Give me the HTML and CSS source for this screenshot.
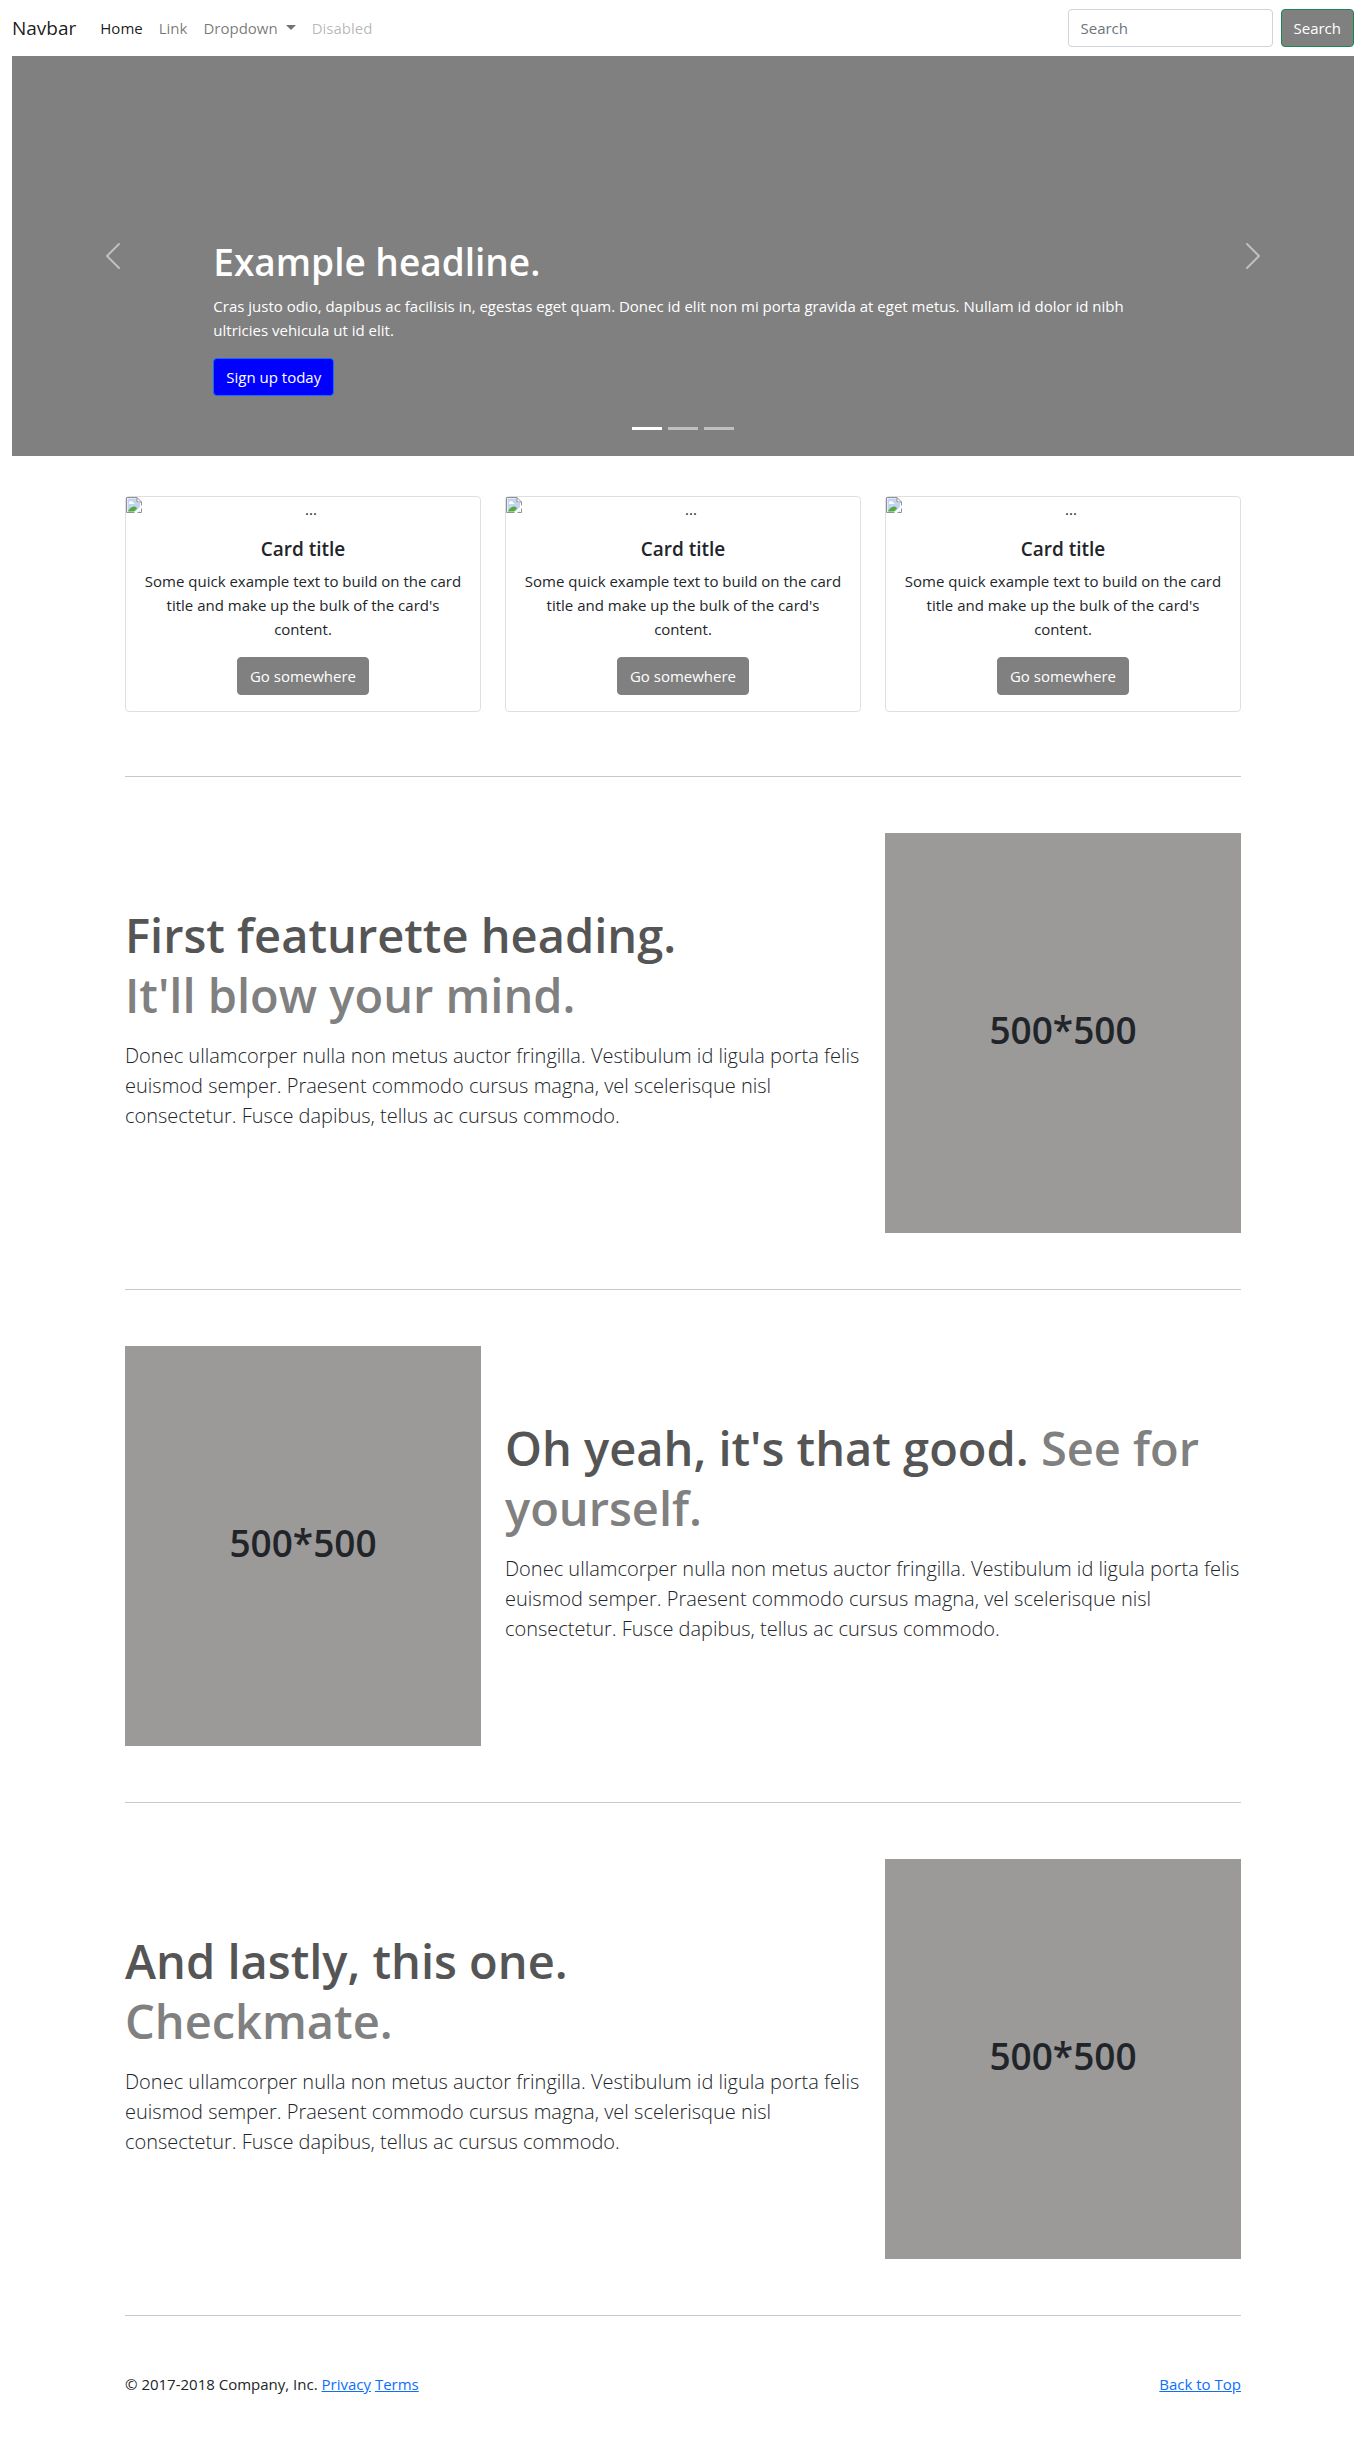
FILE: index.html
```html
<!DOCTYPE html>
<html lang="en">
<head>
<meta charset="utf-8">
<meta name="viewport" content="width=device-width, initial-scale=1">
<title>Carousel page</title>
<link rel="stylesheet" href="styles.css">
</head>
<body>
<svg class="sprite" aria-hidden="true">
  <symbol id="broken-image" viewBox="0 0 16 16">
    <path d="M.5 .5H11L15.500 5V15.500H.5z" fill="#fff"/>
    <path d="M1.500 1.500H11V6H14V14.500H1.500z" fill="#c3d4f4"/>
    <path d="M3 6.500a2 2 0 0 1 4-1a1.500 1.500 0 0 1 1.500 1.500H3z" fill="#fff"/>
    <path d="M2 14.500C3 11.500 6 9.500 8 9.500S10.500 10.500 11 11.500L8 14.500z" fill="#54ab35"/>
    <path d="M.5 15.500V.5H11L15.500 5V15.500H.5M11 .5V5H15.500" fill="none" stroke="#919191"/>
    <path d="M8 16L16 8V11L11 16z" fill="#fff"/>
  </symbol>
</svg>
<nav class="navbar">
  <a class="brand" href="#">Navbar</a>
  <ul class="nav-list">
    <li><a class="nav-link active" href="#">Home</a></li>
    <li><a class="nav-link" href="#">Link</a></li>
    <li><a class="nav-link dropdown" href="#">Dropdown</a></li>
    <li><a class="nav-link disabled" href="#" aria-disabled="true">Disabled</a></li>
  </ul>
  <form class="search">
    <input class="search-input" type="search" placeholder="Search" aria-label="Search">
    <button class="btn btn-search" type="submit">Search</button>
  </form>
</nav>

<header class="carousel">
  <button class="control" type="button" aria-label="Previous">
    <svg viewBox="0 0 16 16" fill="#fff"><path d="M11.354 1.646a.5.5 0 0 1 0 .708L5.707 8l5.647 5.646a.5.5 0 0 1-.708.708l-6-6a.5.5 0 0 1 0-.708l6-6a.5.5 0 0 1 .708 0z"/></svg>
  </button>
  <div class="slide">
    <h1>Example headline.</h1>
    <p>Cras justo odio, dapibus ac facilisis in, egestas eget quam. Donec id elit non mi porta gravida at eget metus. Nullam id dolor id nibh ultricies vehicula ut id elit.</p>
    <a class="btn btn-primary" href="#">Sign up today</a>
  </div>
  <button class="control" type="button" aria-label="Next">
    <svg viewBox="0 0 16 16" fill="#fff"><path d="M4.646 1.646a.5.5 0 0 1 .708 0l6 6a.5.5 0 0 1 0 .708l-6 6a.5.5 0 0 1-.708-.708L10.293 8 4.646 2.354a.5.5 0 0 1 0-.708z"/></svg>
  </button>
  <div class="indicators">
    <button class="current" type="button" aria-label="Slide 1"></button>
    <button type="button" aria-label="Slide 2"></button>
    <button type="button" aria-label="Slide 3"></button>
  </div>
</header>

<main class="container">
  <section class="cards">
    <article class="card">
      <div class="card-image"><svg><use href="#broken-image"/></svg><span>...</span></div>
      <div class="card-body">
        <h2>Card title</h2>
        <p>Some quick example text to build on the card title and make up the bulk of the card's content.</p>
        <a class="btn btn-gray" href="#">Go somewhere</a>
      </div>
    </article>
    <article class="card">
      <div class="card-image"><svg><use href="#broken-image"/></svg><span>...</span></div>
      <div class="card-body">
        <h2>Card title</h2>
        <p>Some quick example text to build on the card title and make up the bulk of the card's content.</p>
        <a class="btn btn-gray" href="#">Go somewhere</a>
      </div>
    </article>
    <article class="card">
      <div class="card-image"><svg><use href="#broken-image"/></svg><span>...</span></div>
      <div class="card-body">
        <h2>Card title</h2>
        <p>Some quick example text to build on the card title and make up the bulk of the card's content.</p>
        <a class="btn btn-gray" href="#">Go somewhere</a>
      </div>
    </article>
  </section>

  <hr>
  <section class="featurette">
    <div class="feature-text">
      <h2>First featurette heading. <span class="new-line">It'll blow your mind.</span></h2>
      <p>Donec ullamcorper nulla non metus auctor fringilla. Vestibulum id ligula porta felis euismod semper. Praesent commodo cursus magna, vel scelerisque nisl consectetur. Fusce dapibus, tellus ac cursus commodo.</p>
    </div>
    <div class="placeholder">500*500</div>
  </section>

  <hr>
  <section class="featurette">
    <div class="placeholder">500*500</div>
    <div class="feature-text">
      <h2>Oh yeah, it's that good. <span>See for yourself.</span></h2>
      <p>Donec ullamcorper nulla non metus auctor fringilla. Vestibulum id ligula porta felis euismod semper. Praesent commodo cursus magna, vel scelerisque nisl consectetur. Fusce dapibus, tellus ac cursus commodo.</p>
    </div>
  </section>

  <hr>
  <section class="featurette">
    <div class="feature-text">
      <h2>And lastly, this one. <span class="new-line">Checkmate.</span></h2>
      <p>Donec ullamcorper nulla non metus auctor fringilla. Vestibulum id ligula porta felis euismod semper. Praesent commodo cursus magna, vel scelerisque nisl consectetur. Fusce dapibus, tellus ac cursus commodo.</p>
    </div>
    <div class="placeholder">500*500</div>
  </section>

  <hr>
  <footer class="footer">
    <p>© 2017-2018 Company, Inc. <a href="#">Privacy</a> <a href="#">Terms</a></p>
    <a href="#">Back to Top</a>
  </footer>
</main>
</body>
</html>
```
FILE: styles.css
```css
* { box-sizing: border-box; }

body {
  margin: 0;
  padding: 0 12px;
  font-family: "Segoe UI", "Open Sans", sans-serif;
  font-size: 15px;
  line-height: 24px;
  color: #212529;
  background: #fff;
}

h1, h2, p, ul { margin: 0; padding: 0; }
h1, h2 { font-weight: 600; }
a { color: #0d6efd; }
.sprite { display: none; }

.btn {
  display: inline-block;
  padding: 6px 12px;
  border: 1px solid gray;
  border-radius: 4px;
  background: gray;
  color: #fff;
  font: inherit;
  text-align: center;
  text-decoration: none;
  cursor: pointer;
}
.btn-primary { background: blue; border-color: #0d6efd; }
.btn-search { border-color: #198754; }

.navbar { display: flex; align-items: center; height: 56px; }
.brand {
  margin-right: 16px;
  color: rgba(0, 0, 0, .9);
  font-size: 19px;
  line-height: 30px;
  text-decoration: none;
}
.nav-list { display: flex; list-style: none; }
.nav-link {
  display: block;
  padding: 8px;
  color: rgba(0, 0, 0, .55);
  text-decoration: none;
}
.nav-link.active { color: rgba(0, 0, 0, .9); }
.nav-link.disabled { color: rgba(0, 0, 0, .3); }
.dropdown::after {
  content: "";
  display: inline-block;
  margin-left: 8px;
  vertical-align: 4px;
  border: 5px solid transparent;
  border-top-color: currentColor;
  border-bottom: 0;
}
.search { display: flex; gap: 8px; margin-left: auto; }
.search-input {
  width: 205px;
  height: 38px;
  padding: 6px 12px;
  border: 1px solid #ced4da;
  border-radius: 4px;
  background: #fff;
  color: #212529;
  font: inherit;
}
.search-input::placeholder { color: #6c757d; opacity: 1; }

.carousel {
  position: relative;
  display: grid;
  grid-template-columns: 15% 1fr 15%;
  min-height: 400px;
  background: gray;
  color: #fff;
}
.slide { align-self: end; padding: 60px 0; }
.slide h1 { margin-bottom: 8px; font-size: 37px; line-height: 48px; }
.slide p { margin-bottom: 16px; }
.slide .btn { display: table; }
.control {
  display: flex;
  align-items: center;
  justify-content: center;
  padding: 0;
  border: 0;
  background: none;
  opacity: .5;
}
.control svg { width: 32px; height: 32px; }
.indicators {
  position: absolute;
  right: 0;
  bottom: 26px;
  left: 0;
  display: flex;
  justify-content: center;
  gap: 6px;
}
.indicators button {
  width: 30px;
  height: 3px;
  padding: 0;
  border: 0;
  background: #fff;
  opacity: .5;
}
.indicators .current { opacity: 1; }

.container { max-width: 1116px; margin: 0 auto; padding-top: 40px; }
.cards {
  display: grid;
  grid-template-columns: repeat(3, 1fr);
  gap: 24px;
  margin-bottom: 64px;
}
.card {
  border: 1px solid rgba(0, 0, 0, .125);
  border-radius: 4px;
  text-align: center;
}
.card-image { display: flex; }
.card-image svg { width: 16px; height: 16px; }
.card-image span { flex: 1; }
.card-body { padding: 16px; }
.card-body h2 { margin-bottom: 8px; font-size: 19px; line-height: 24px; }
.card-body p { margin-bottom: 16px; }
.card-body .btn { display: table; margin: 0 auto; }

hr { height: 1px; margin: 56px 0; border: 0; background: #c8c9ca; }

.featurette {
  display: grid;
  grid-template-columns: repeat(3, 1fr);
  gap: 24px;
  min-height: 400px;
}
.feature-text { grid-column: span 2; padding-top: 72px; }
.feature-text h2 {
  margin-bottom: 16px;
  color: #555;
  font-size: 47px;
  line-height: 60px;
}
.feature-text h2 span { color: gray; }
.feature-text .new-line { display: block; }
.feature-text p { font-size: 20px; font-weight: 300; line-height: 30px; }
.placeholder {
  display: flex;
  align-items: center;
  justify-content: center;
  padding-bottom: 6px;
  background: #9c9999;
  font-size: 37px;
  font-weight: 600;
  line-height: 48px;
}

.footer { display: flex; justify-content: space-between; padding-bottom: 48px; }
```
